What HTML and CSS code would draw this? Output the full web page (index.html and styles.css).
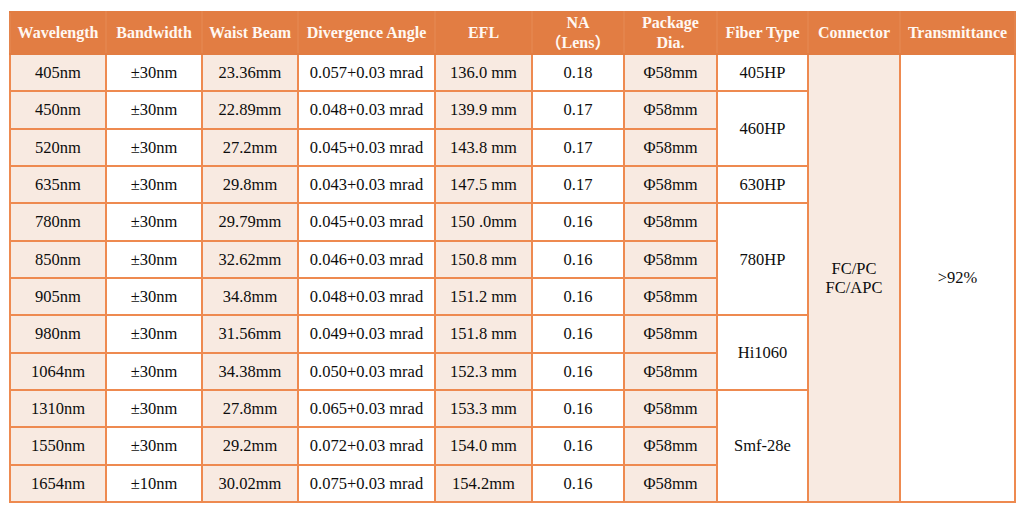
FILE: index.html
```html
<!DOCTYPE html>
<html>
<head>
<meta charset="utf-8">
<link rel="stylesheet" href="styles.css">
</head>
<body>
<table class="spec">
<colgroup>
<col class="c1"><col class="c2"><col class="c3"><col class="c4"><col class="c5"><col class="c6"><col class="c7"><col class="c8"><col class="c9"><col class="c10">
</colgroup>
<thead>
<tr>
<th>Wavelength</th><th>Bandwidth</th><th>Waist Beam</th><th>Divergence Angle</th><th>EFL</th><th>NA<br>（Lens）</th><th>Package<br>Dia.</th><th>Fiber Type</th><th>Connector</th><th>Transmittance</th>
</tr>
</thead>
<tbody>
<tr><td class="p">405nm</td><td>±30nm</td><td class="p">23.36mm</td><td>0.057+0.03 mrad</td><td class="p">136.0 mm</td><td>0.18</td><td class="p">Φ58mm</td><td>405HP</td><td class="p" rowspan="12">FC/PC<br>FC/APC</td><td rowspan="12">&gt;92%</td></tr>
<tr><td class="p">450nm</td><td>±30nm</td><td class="p">22.89mm</td><td>0.048+0.03 mrad</td><td class="p">139.9 mm</td><td>0.17</td><td class="p">Φ58mm</td><td rowspan="2">460HP</td></tr>
<tr><td class="p">520nm</td><td>±30nm</td><td class="p">27.2mm</td><td>0.045+0.03 mrad</td><td class="p">143.8 mm</td><td>0.17</td><td class="p">Φ58mm</td></tr>
<tr><td class="p">635nm</td><td>±30nm</td><td class="p">29.8mm</td><td>0.043+0.03 mrad</td><td class="p">147.5 mm</td><td>0.17</td><td class="p">Φ58mm</td><td>630HP</td></tr>
<tr><td class="p">780nm</td><td>±30nm</td><td class="p">29.79mm</td><td>0.045+0.03 mrad</td><td class="p">150 .0mm</td><td>0.16</td><td class="p">Φ58mm</td><td rowspan="3">780HP</td></tr>
<tr><td class="p">850nm</td><td>±30nm</td><td class="p">32.62mm</td><td>0.046+0.03 mrad</td><td class="p">150.8 mm</td><td>0.16</td><td class="p">Φ58mm</td></tr>
<tr><td class="p">905nm</td><td>±30nm</td><td class="p">34.8mm</td><td>0.048+0.03 mrad</td><td class="p">151.2 mm</td><td>0.16</td><td class="p">Φ58mm</td></tr>
<tr><td class="p">980nm</td><td>±30nm</td><td class="p">31.56mm</td><td>0.049+0.03 mrad</td><td class="p">151.8 mm</td><td>0.16</td><td class="p">Φ58mm</td><td rowspan="2">Hi1060</td></tr>
<tr><td class="p">1064nm</td><td>±30nm</td><td class="p">34.38mm</td><td>0.050+0.03 mrad</td><td class="p">152.3 mm</td><td>0.16</td><td class="p">Φ58mm</td></tr>
<tr><td class="p">1310nm</td><td>±30nm</td><td class="p">27.8mm</td><td>0.065+0.03 mrad</td><td class="p">153.3 mm</td><td>0.16</td><td class="p">Φ58mm</td><td rowspan="3">Smf-28e</td></tr>
<tr><td class="p">1550nm</td><td>±30nm</td><td class="p">29.2mm</td><td>0.072+0.03 mrad</td><td class="p">154.0 mm</td><td>0.16</td><td class="p">Φ58mm</td></tr>
<tr><td class="p">1654nm</td><td>±10nm</td><td class="p">30.02mm</td><td>0.075+0.03 mrad</td><td class="p">154.2mm</td><td>0.16</td><td class="p">Φ58mm</td></tr>
</tbody>
</table>
</body>
</html>
```

FILE: styles.css
```css
html, body {
  margin: 0;
  padding: 0;
  background: #ffffff;
}
body {
  padding: 11px 0 0 9px;
  font-family: "Liberation Serif", "Times New Roman", "Noto Sans CJK SC", serif;
  color: #0d0d0d;
}
.spec {
  border-collapse: collapse;
  table-layout: fixed;
  width: 1005px;
}
.c1 { width: 96px; }
.c2 { width: 96px; }
.c3 { width: 96px; }
.c4 { width: 137px; }
.c5 { width: 97px; }
.c6 { width: 92px; }
.c7 { width: 93px; }
.c8 { width: 91px; }
.c9 { width: 92px; }
.c10 { width: 115px; }
.spec th {
  background: #e27d43;
  color: #fff8f2;
  font-weight: bold;
  font-size: 16px;
  line-height: 20px;
  height: 39px;
  padding: 0;
  border: 2px solid #e27d43;
  border-left-color: #e4844c;
  border-right-color: #e4844c;
  white-space: nowrap;
  text-align: center;
  vertical-align: middle;
}
.spec td {
  border: 2px solid #ee8a50;
  font-size: 16.5px;
  line-height: 19px;
  height: 35.33px;
  padding: 0;
  text-align: center;
  vertical-align: middle;
  background: #ffffff;
  white-space: nowrap;
}
.spec td.p {
  background: #f8eae1;
}
```
